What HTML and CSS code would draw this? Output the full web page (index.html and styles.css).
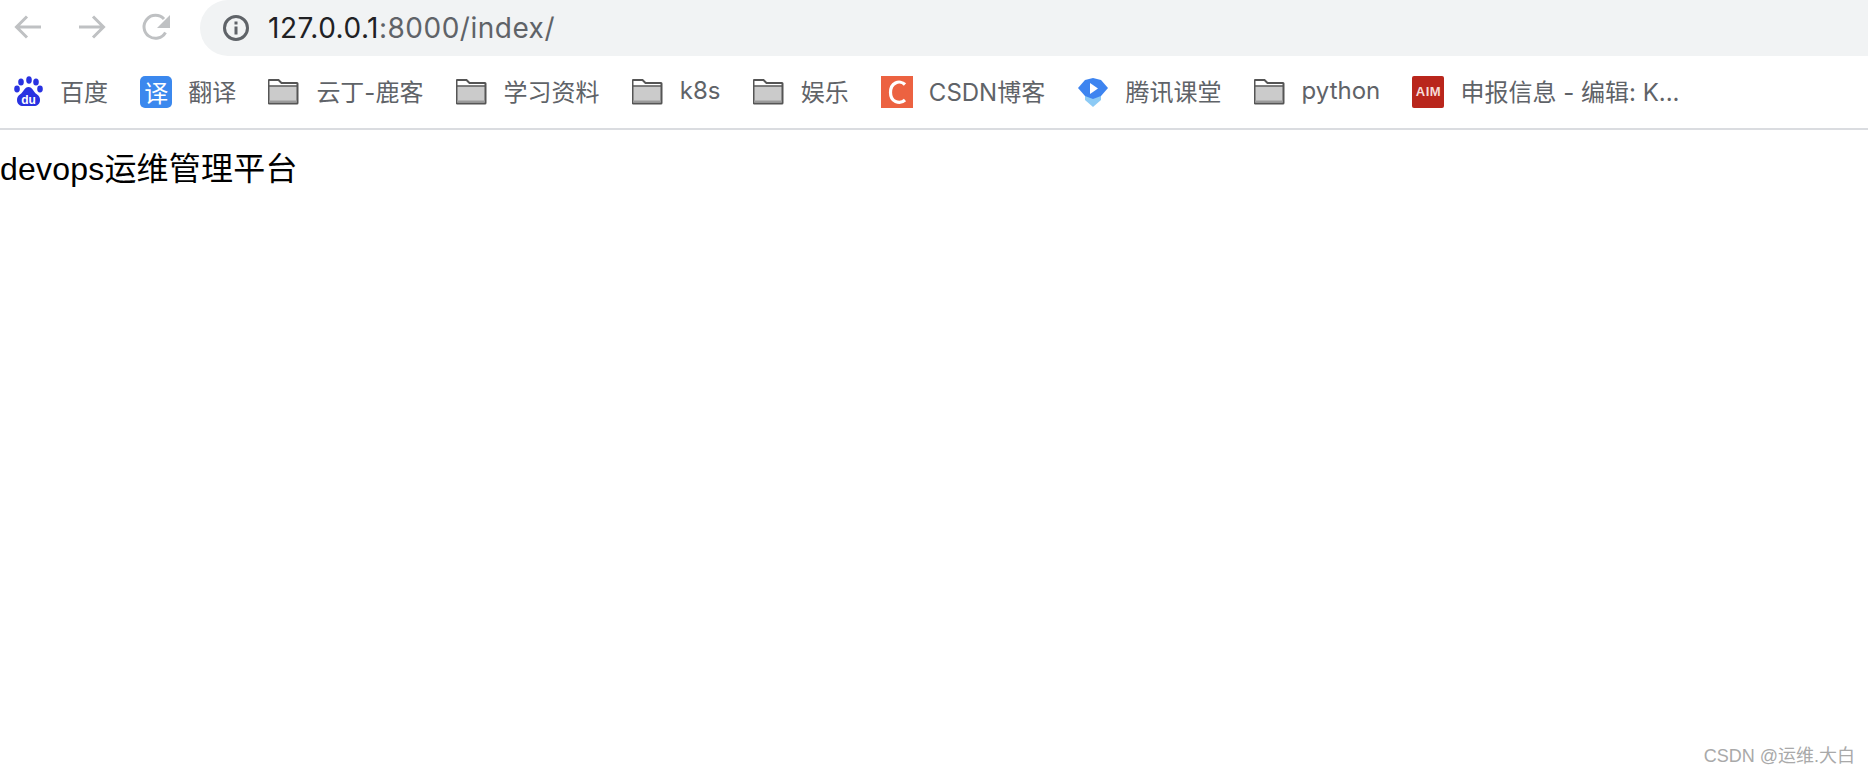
FILE: index.html
```html
<!DOCTYPE html>
<html lang="zh">
<head>
    <meta charset="UTF-8">
    <title>devops运维管理平台</title>
    <link rel="stylesheet" href="styles.css">
</head>
<body>

    <div class="toolbar">
        <div class="nav">
            <svg class="nav-icon" viewBox="0 0 32 32"><path d="M29 16H5M15 5.500L4.500 16 15 26.500"/></svg>
            <svg class="nav-icon" viewBox="0 0 32 32"><path d="M3 16h24M17 5.500L27.500 16 17 26.500"/></svg>
            <svg class="nav-icon" viewBox="0 0 32 32"><path d="M25.500 21.500A11.500 11.500 0 1 1 24 8"/><path class="solid" d="M30 4V17H17z"/></svg>
        </div>
        <div class="address">
            <svg class="info" viewBox="0 0 28 28"><circle cx="14" cy="14" r="11.500"/><rect x="12.500" y="12.500" width="3" height="8"/><rect x="12.500" y="7.500" width="3" height="3"/></svg>
            <span class="url">127.0.0.1<span class="url-rest">:8000/index/</span></span>
        </div>
    </div>

    <div class="bookmarks">
        <div class="mark">
            <svg class="fav" viewBox="0 0 32 32">
                <ellipse class="blue" cx="9" cy="6" rx="2.800" ry="3.600"/>
                <ellipse class="blue" cx="17" cy="4" rx="2.800" ry="3.800"/>
                <ellipse class="blue" cx="24" cy="6" rx="2.800" ry="3.600"/>
                <ellipse class="blue" cx="28" cy="13" rx="2.800" ry="3.400"/>
                <ellipse class="blue" cx="5" cy="13" rx="2.800" ry="3.400"/>
                <path class="blue" d="M16.500 11c-4 0-5 5-8 7-3 2-3.500 4-3.500 6 0 4 3 6 6 6h11c3 0 6-2 6-6 0-2-.5-4-3.500-6-3-2-4-7-8-7z"/>
                <text class="du" x="16.500" y="28">du</text>
            </svg>
            <span>百度</span>
        </div>
        <div class="mark">
            <div class="tile tile-yi">译</div>
            <span>翻译</span>
        </div>
        <div class="mark">
            <svg class="fav" viewBox="0 0 32 32"><use href="#folder"/></svg>
            <span>云丁-鹿客</span>
        </div>
        <div class="mark">
            <svg class="fav" viewBox="0 0 32 32"><use href="#folder"/></svg>
            <span>学习资料</span>
        </div>
        <div class="mark">
            <svg class="fav" viewBox="0 0 32 32"><use href="#folder"/></svg>
            <span>k8s</span>
        </div>
        <div class="mark">
            <svg class="fav" viewBox="0 0 32 32"><use href="#folder"/></svg>
            <span>娱乐</span>
        </div>
        <div class="mark">
            <svg class="fav" viewBox="0 0 32 32">
                <rect width="32" height="32" fill="#ec6241"/>
                <path d="M24 8.500C21.500 6 17.500 5.500 14.500 7 10.500 9 9.500 13 9.500 16.500c0 4 1.500 7.500 5 9 3 1.300 7 .8 9.500-1.500" fill="none" stroke="#fff" stroke-width="3.200"/>
            </svg>
            <span>CSDN博客</span>
        </div>
        <div class="mark">
            <svg class="fav" viewBox="0 0 32 32">
                <path d="M8 19h16v5l-8 7-8-7z" fill="#8ccaf5"/>
                <path d="M16 2l8 2 7 8-7 8-8 3-8-3-7-8 7-8z" fill="#3d84f0"/>
                <path d="M13 7l8 5.500-8 5.500z" fill="#fff"/>
            </svg>
            <span>腾讯课堂</span>
        </div>
        <div class="mark">
            <svg class="fav" viewBox="0 0 32 32"><use href="#folder"/></svg>
            <span>python</span>
        </div>
        <div class="mark">
            <div class="tile tile-aim">AIM</div>
            <span>申报信息 - 编辑: K...</span>
        </div>
    </div>

    <p class="content">devops运维管理平台</p>

    <div class="watermark">CSDN @运维.大白</div>

    <svg class="defs" width="0" height="0">
        <symbol id="folder" viewBox="0 0 32 32">
            <path d="M.5 10.500h29V27a.5.500 0 0 1-.5.500H1a.5.500 0 0 1-.5-.5z" fill="#cbcbcb"/>
            <path d="M1 4h9.500l3 3H29a.5.500 0 0 1 .5.500V27a.5.500 0 0 1-.5.500H1a.5.500 0 0 1-.5-.5V4.500A.5.500 0 0 1 1 4z" fill="none" stroke="#555" stroke-width="2"/>
            <path d="M1 10h28" stroke="#555" stroke-width="1.500"/>
            <path d="M1 25.500h28" stroke="#9a9a9a" stroke-width="2"/>
        </symbol>
    </svg>

</body>
</html>
```

FILE: styles.css
```css
html, body { margin: 0; height: 100%; }
body { position: relative; background: #fff; color: #000; font-family: "Liberation Sans", "Noto Sans CJK SC", sans-serif; overflow: hidden; }

.toolbar { display: flex; height: 56px; }
.nav { display: flex; gap: 32px; width: 200px; box-sizing: border-box; padding: 11px 0 0 12px; }
.nav-icon { width: 32px; height: 32px; fill: none; stroke: #bfc1c3; stroke-width: 3; }
.nav-icon .solid { fill: #bfc1c3; stroke: none; }
.address { flex: 1; display: flex; align-items: center; gap: 18px; padding-left: 22px; background: #f1f3f4; border-radius: 28px 0 0 28px; }
.info { width: 28px; height: 28px; fill: #5f6368; flex: none; }
.info circle { fill: none; stroke: #5f6368; stroke-width: 3; }
.url { font-family: "Inter", "Liberation Sans", sans-serif; font-size: 28px; letter-spacing: .5px; color: #202124; }
.url-rest { color: #5f6368; }

.bookmarks { display: flex; align-items: center; gap: 32.2px; height: 72px; padding-left: 12px; border-bottom: 2px solid #dadce0; font-size: 24px; color: #5f6368; font-family: "Inter", "Noto Sans CJK SC", sans-serif; }
.mark { display: flex; align-items: center; gap: 16px; white-space: nowrap; }
.mark span { margin-top: -4px; }
.fav { width: 32px; height: 32px; flex: none; }
.tile { display: flex; align-items: center; justify-content: center; width: 32px; height: 32px; flex: none; line-height: 32px; }
.tile-yi { background: #3b88ee; border-radius: 5px; color: #fff; font: 24px/32px "Noto Sans CJK SC", sans-serif; }
.tile-aim { background: #b9261c; border-radius: 2px; color: #f6dcd9; font: bold 13px/32px "Liberation Sans", sans-serif; letter-spacing: .5px; }
.blue { fill: #2932e1; }
.du { font: bold 12px "Liberation Sans", sans-serif; fill: #fff; text-anchor: middle; }
.defs { position: absolute; }

.content { margin: 0; padding-top: 13px; font-size: 32px; letter-spacing: .2px; }

.watermark { position: absolute; right: 13px; bottom: 7px; font-size: 18px; color: #a9a9a9; }
```
